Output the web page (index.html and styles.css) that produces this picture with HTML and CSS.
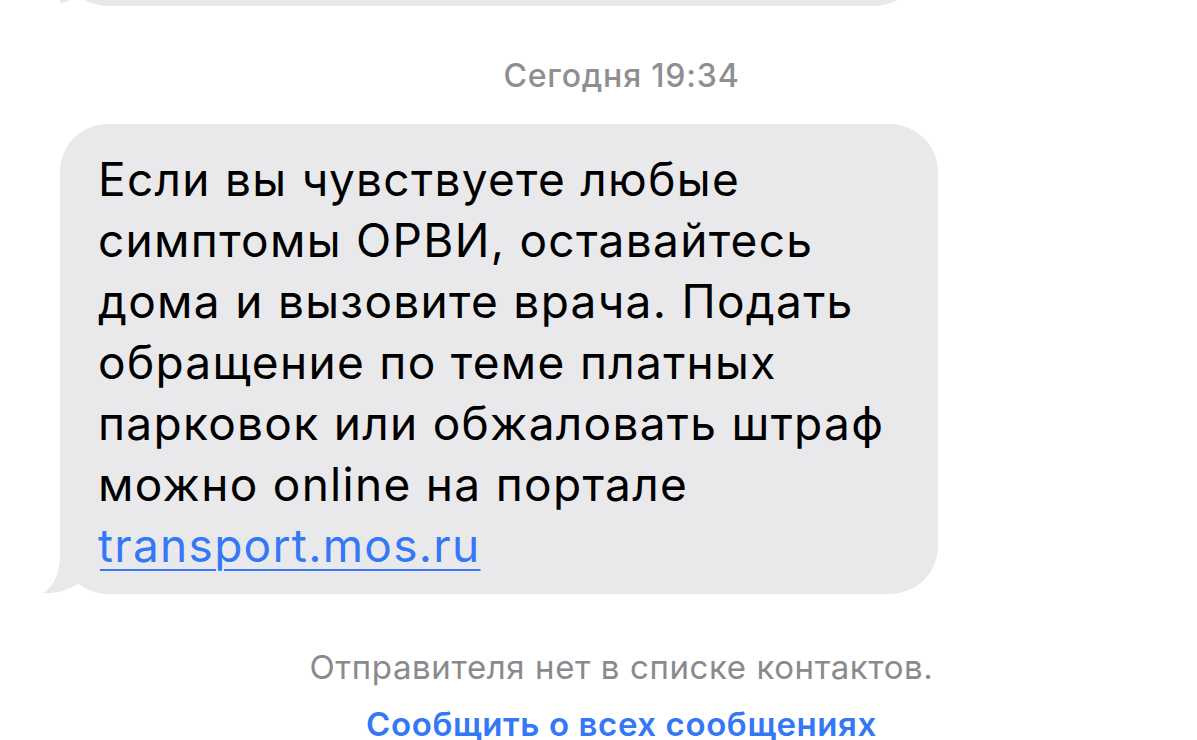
FILE: index.html
```html
<!DOCTYPE html>
<html>
<head>
  <meta charset="utf-8">
  <title>Сообщения</title>
  <link rel="stylesheet" href="styles.css">
</head>
<body>
  <div class="thread">
    <div class="message message-prev">
      <div class="bubble"></div>
      <svg class="tail" width="60" height="50" viewBox="0 0 60 50">
        <path d="M20 0 L20 12 C20 30 13 43 3 49 C14 50 26 47 38 40 L60 40 L60 0 Z" fill="#e9e9eb"/>
      </svg>
    </div>

    <div class="timestamp">Сегодня 19:34</div>

    <div class="message">
      <div class="bubble">
        Если вы чувствуете любые симптомы ОРВИ, оставайтесь дома и вызовите врача. Подать обращение по теме платных парковок или обжаловать штраф можно online на портале <a href="#">transport.mos.ru</a>
      </div>
      <svg class="tail" width="60" height="50" viewBox="0 0 60 50">
        <path d="M20 0 L20 12 C20 30 13 43 3 49 C14 50 26 47 38 40 L60 40 L60 0 Z" fill="#e9e9eb"/>
      </svg>
    </div>

    <div class="notice">Отправителя нет в списке контактов.</div>
    <div class="report">Сообщить о всех сообщениях</div>
  </div>
</body>
</html>
```

FILE: styles.css
```css
body {
  margin: 0;
  background: #fff;
  font-family: Inter, "Noto Sans", sans-serif;
}
.thread {
  width: 1197px;
}
.message {
  position: relative;
  margin-left: 60px;
  width: 878px;
}
.message-prev {
  width: 862px;
  height: 6px;
  display: flex;
  align-items: flex-end;
  overflow: hidden;
}
.message-prev .bubble {
  flex: none;
  width: 100%;
  height: 100px;
  padding: 0;
}
.bubble {
  box-sizing: border-box;
  background: #e9e9eb;
  border-radius: 48px;
  padding: 25px 40px 18px 38px;
  font-size: 46px;
  line-height: 61px;
  color: #000;
  letter-spacing: 1.3px;
}
.bubble a {
  color: #3478f6;
  text-decoration: underline;
  text-underline-offset: 7px;
  text-decoration-thickness: 2px;
}
.tail {
  position: absolute;
  left: -20px;
  bottom: 0;
}
.timestamp {
  padding-left: 46px;
  margin-top: 54px;
  margin-bottom: 32px;
  text-align: center;
  font-size: 32px;
  font-weight: 500;
  letter-spacing: 0.8px;
  color: #8e8e93;
  line-height: 32px;
}
.notice {
  padding-left: 46px;
  margin-top: 57px;
  text-align: center;
  font-size: 33px;
  letter-spacing: 0.6px;
  color: #8a8a8e;
  line-height: 32px;
}
.report {
  padding-left: 46px;
  margin-top: 25px;
  text-align: center;
  font-size: 33px;
  font-weight: 600;
  letter-spacing: 0.6px;
  color: #3478f6;
  line-height: 32px;
}
```
